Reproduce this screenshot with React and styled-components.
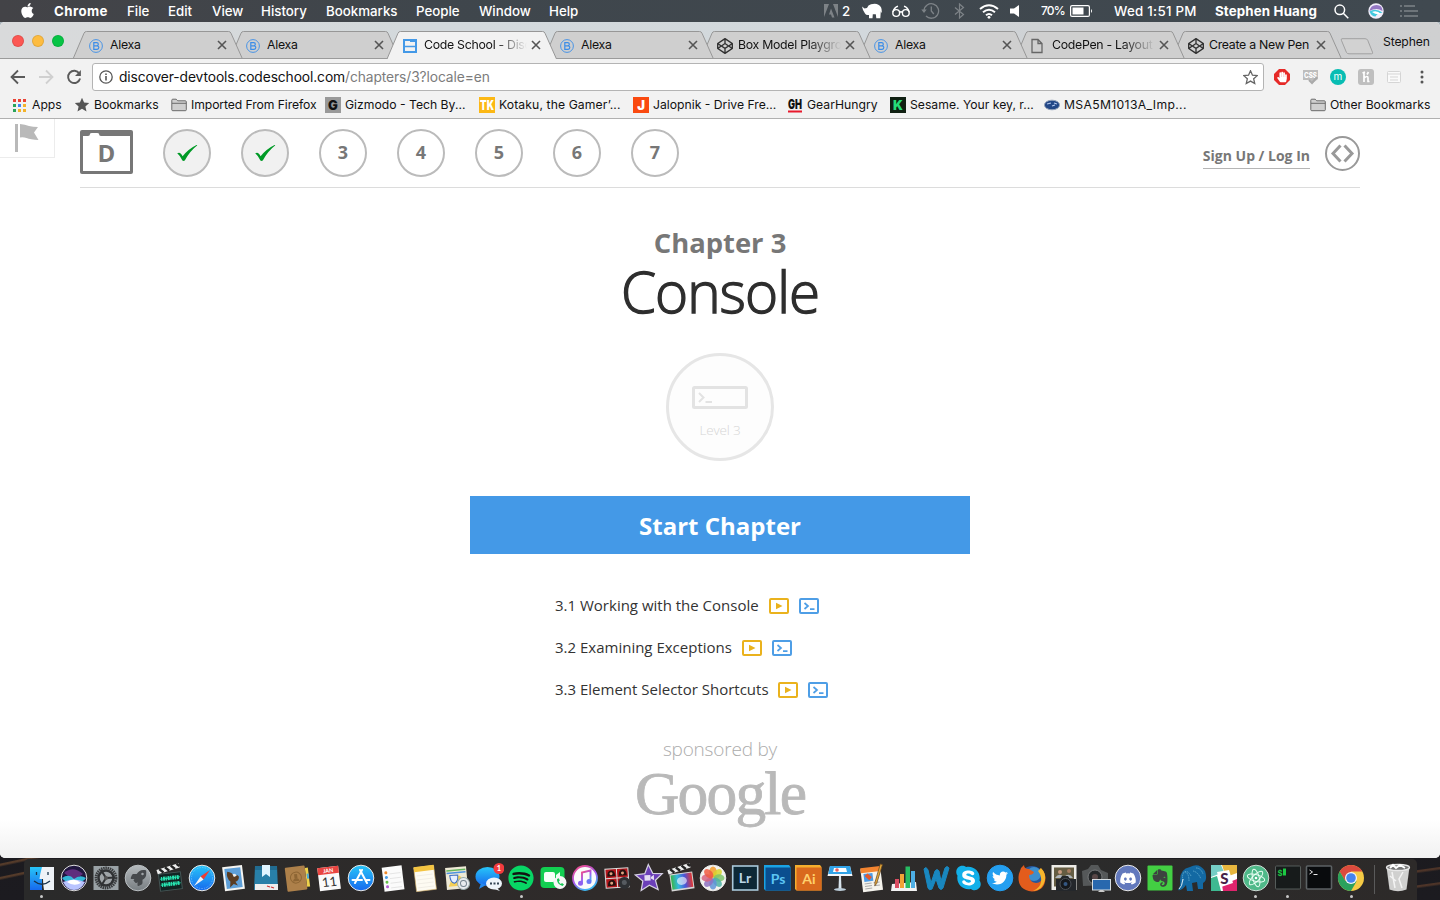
import React from "react";
import styled, { createGlobalStyle, css } from "styled-components";
import {
  FaApple, FaSpotify, FaDiscord, FaEvernote, FaTwitter, FaSkype, FaCodepen, FaRocket, FaHandPaper,
} from "react-icons/fa";

const ui = `Inter, "Liberation Sans", sans-serif`;
const open = `"Open Sans", "Noto Sans", sans-serif`;

const Global = createGlobalStyle`
  * { box-sizing: border-box; }
  body { margin: 0; background: #17120f; }
  svg { display: block; flex: none; }
`;

const Desktop = styled.div`
  width: 1440px;
  height: 900px;
  overflow: hidden;
  display: flex;
  flex-direction: column;
  font-family: ${ui};
  color: #111;
  background:
    linear-gradient(#a9b4bb, #a9b4bb) 0 0 / 1440px 40px no-repeat,
    repeating-linear-gradient(168deg, transparent 0 5px, rgba(214, 132, 66, 0.3) 6px 7px, transparent 9px 13px) 0 858px / 60px 22px no-repeat,
    repeating-linear-gradient(172deg, transparent 0 6px, rgba(190, 110, 60, 0.3) 7px 8px, transparent 10px 15px) 1400px 866px / 40px 26px no-repeat,
    linear-gradient(#19130f, #1c1b20);
`;

/* ---------- system menu bar ---------- */
const MenuBar = styled.header`
  height: 22px;
  flex: none;
  display: flex;
  align-items: center;
  background: linear-gradient(90deg, #434347, #3f464c 30%, #404950);
  color: #fff;
`;
const AppleSlot = styled.div`
  width: 54px;
  padding: 0 0 2px 19px;
`;
const MenuItem = styled.span`
  width: ${(p) => p.$w}px;
  font-size: ${(p) => p.$size || 13.3}px;
  line-height: 22px;
  font-weight: ${(p) => (p.$bold ? 700 : 500)};
  letter-spacing: ${(p) => p.$ls || 0}px;
  white-space: nowrap;
`;
const Status = styled.div`
  display: flex;
  align-items: center;
  margin-left: auto;
  padding-right: 22px;
`;
const StatusIcon = styled.div`
  width: ${(p) => p.$w}px;
  margin-right: ${(p) => p.$gap || 0}px;
  display: flex;
  justify-content: center;
  opacity: ${(p) => (p.$dim ? 0.32 : 1)};
`;

/* ---------- browser window ---------- */
const BrowserWindow = styled.main`
  height: 836px;
  flex: none;
  display: flex;
  flex-direction: column;
  overflow: hidden;
  border-radius: 5px;
  background: #fff;
`;
const TabStrip = styled.div`
  height: 37px;
  flex: none;
  display: flex;
  align-items: flex-end;
  background: linear-gradient(90deg, #d9dadb, #d3d9dc 30%, #d2d8dc 60%, #cdced0 80%, #cfd0d1);
  border-bottom: 1px solid #9b9b9b;
`;
const Lights = styled.div`
  width: 73px;
  height: 36px;
  flex: none;
  padding: 13px 0 0 12px;
  display: flex;
  gap: 8px;
`;
const Light = styled.i`
  width: 12px;
  height: 12px;
  flex: none;
  border-radius: 50%;
  background: ${(p) => p.$c};
  border: 1px solid rgba(0, 0, 0, 0.1);
`;
const TabBox = styled.div`
  position: relative;
  z-index: ${(p) => (p.$active ? 20 : 10 - p.$order)};
  width: 169px;
  height: 28px;
  margin: 0 -12px -1px 0;
  padding: 1px 13px 0 16px;
  display: flex;
  align-items: center;
  flex: none;
`;
const TabShape = styled.svg`
  position: absolute;
  inset: 0;
  z-index: -1;
`;
const Favicon = styled.div`
  width: 21px;
  display: flex;
`;
const TabTitle = styled.span`
  width: 103px;
  margin-right: 1px;
  padding-bottom: 1px;
  overflow: hidden;
  white-space: nowrap;
  font-size: 12.3px;
  line-height: 18px;
  letter-spacing: -0.28px;
  ${(p) => p.$fade && css`mask-image: linear-gradient(90deg, #000 68%, transparent 100%);`}
`;
const CloseSlot = styled.div`
  width: 15px;
  padding: 0 0 1px 3px;
`;
const NewTab = styled.div`
  width: 34px;
  height: 28px;
  flex: none;
  margin-left: 11px;
  padding-top: 8px;
`;
const Profile = styled.span`
  height: 27px;
  margin-left: 9px;
  font-size: 12.2px;
  line-height: 21px;
  letter-spacing: -0.15px;
`;
const Toolbar = styled.div`
  height: 32px;
  flex: none;
  display: flex;
  align-items: center;
  padding: 4px 0 0 4px;
  background: #f2f2f2;
`;
const NavButton = styled.div`
  width: 28px;
  display: flex;
  justify-content: center;
`;
const Omnibox = styled.div`
  width: 1172px;
  height: 28px;
  flex: none;
  margin: 0 4px;
  padding: 0 5px 0 6px;
  display: flex;
  align-items: center;
  background: #fff;
  border: 1px solid #b4b4b4;
  border-radius: 3px;
`;
const Url = styled.span`
  flex: 1;
  padding-left: 6px;
  font-size: 13.8px;
  line-height: 18px;
  letter-spacing: -0.1px;
  em { font-style: normal; color: #7c7c7c; }
`;
const Extension = styled.div`
  width: 28px;
  display: flex;
  justify-content: center;
`;
const BookmarkBar = styled.nav`
  height: 28px;
  flex: none;
  display: flex;
  align-items: center;
  padding-left: 12px;
  background: #f2f2f2;
  border-bottom: 1px solid #b0b0b0;
`;
const Bookmark = styled.div`
  width: ${(p) => p.$w}px;
  display: flex;
  align-items: center;
  white-space: nowrap;
  font-size: 12.2px;
  line-height: 18px;
  letter-spacing: ${(p) => p.$ls || 0}px;
  margin-left: ${(p) => (p.$end ? "auto" : 0)};
`;
const BookmarkIcon = styled.div`
  width: 20px;
  flex: none;
`;

/* ---------- course page ---------- */
const Page = styled.section`
  flex: 1;
  display: flex;
  align-items: flex-start;
  font-family: ${open};
  background: linear-gradient(#fff 0, #fff 700px, #f1f1f1 739px);
`;
const FlagBox = styled.div`
  width: 55px;
  height: 39px;
  margin-right: 25px;
  padding: 5px 0 0 15px;
  border: solid #ececec;
  border-width: 0 1px 1px 0;
`;
const Content = styled.div`
  width: 1280px;
  display: flex;
  flex-direction: column;
  align-items: center;
`;
const CourseHeader = styled.div`
  width: 100%;
  height: 69px;
  padding-top: 10px;
  display: flex;
  align-items: flex-start;
  border-bottom: 1px solid #dcdcdc;
`;
const CourseLogo = styled.div`
  margin: 1px 30px 0 0;
`;
const Step = styled.div`
  width: 48px;
  height: 48px;
  margin-right: 30px;
  padding-bottom: ${(p) => (p.$done ? 0 : 2)}px;
  display: flex;
  align-items: center;
  justify-content: center;
  border: 2px solid #bbb;
  border-radius: 50%;
  background: ${(p) => (p.$done ? "#f1f1f1" : "#fff")};
  color: #777;
  font-size: 18px;
  line-height: 24px;
  font-weight: 700;
`;
const SignIn = styled.a`
  margin: 17px 15px 0 auto;
  height: 23px;
  color: #777;
  font-size: 14px;
  line-height: 20px;
  font-weight: 700;
  border-bottom: 1px solid #b5b5b5;
`;
const SchoolBadge = styled.div`
  margin-top: 7px;
`;
const ChapterNumber = styled.h2`
  margin: 35px 0 0;
  height: 40px;
  color: #777;
  font-size: 27.4px;
  line-height: 40px;
  font-weight: 700;
`;
const ChapterTitle = styled.h1`
  margin: -2px 0 0;
  height: 72px;
  color: #2e2e2e;
  font-size: 56.5px;
  line-height: 62px;
  font-weight: 300;
  letter-spacing: -0.95px;
  -webkit-text-stroke: 1.4px #2e2e2e;
`;
const LevelBadge = styled.div`
  width: 108px;
  height: 108px;
  margin: 20px 1px 0 0;
  padding-top: 30px;
  display: flex;
  flex-direction: column;
  align-items: center;
  border: 3px solid #e6e6e6;
  border-radius: 50%;
  background: #fdfdfd;
  color: #d6d6d6;
  font-size: 13.5px;
  line-height: 20px;
  font-weight: 300;
  letter-spacing: -0.2px;
`;
const LevelText = styled.span`
  margin: 11px 0 0 1px;
`;
const StartButton = styled.button`
  width: 500px;
  height: 58px;
  margin-top: 35px;
  padding: 0;
  border: 0;
  background: #4499e7;
  color: #fff;
  font: 700 24px/57px ${open};
`;
const Lessons = styled.ul`
  width: 330px;
  margin: 31px 0 0;
  padding: 0;
  list-style: none;
`;
const Lesson = styled.li`
  height: 42px;
  display: flex;
  align-items: center;
  gap: 10px;
  color: #333;
  font-size: 15px;
  line-height: 20px;
`;
const LessonTitle = styled.span`
  width: ${(p) => p.$w}px;
  padding-bottom: 2px;
  white-space: nowrap;
`;
const Sponsor = styled.div`
  margin-top: 26px;
  height: 24px;
  color: #acacac;
  font-size: 19px;
  line-height: 24px;
  font-weight: 300;
  letter-spacing: -0.2px;
`;
const Wordmark = styled.div`
  color: #b9b9b9;
  font: 61.5px/64px "Liberation Serif", serif;
  letter-spacing: -1.8px;
  -webkit-text-stroke: 0.8px #b9b9b9;
`;

/* ---------- dock ---------- */
const Dock = styled.footer`
  width: 1393px;
  height: 41px;
  margin: 1px 0 0 24px;
  padding: 4px 0 0 2px;
  display: flex;
  border-radius: 5px 5px 0 0;
  background: linear-gradient(90deg, #2a2a2a, #302b2a 50%, #2b2b2b 75%, #2d2a29);
`;
const DockSlot = styled.div`
  width: 31.95px;
  flex: none;
  display: flex;
  flex-direction: column;
  align-items: center;
`;
const RunningDot = styled.i`
  width: 3px;
  height: 3px;
  margin-top: 2px;
  border-radius: 50%;
  background: #c8c8c8;
`;
const DockDivider = styled.div`
  width: 1px;
  height: 29px;
  margin: 2px 7px 0;
  background: #5a5a5a;
`;

/* ---------- small drawings ---------- */
const AlexaIcon = () => (
  <svg width="14" height="14" viewBox="0 0 14 14" fill="none" stroke="#3b8de8">
    <circle cx="7" cy="7" r="6.4" strokeWidth=".9" />
    <path d="M4.800 3.700h2.900a1.600 1.600 0 010 3.200H4.800zM4.800 6.900h3.300a1.700 1.700 0 010 3.400H4.800z" strokeWidth="1.200" />
  </svg>
);
const SchoolIcon = () => (
  <svg width="14" height="14" fill="none" stroke="#4499e7" strokeWidth="2">
    <path d="M1 1h12v12H1z" /><path d="M1 7.500h12" strokeWidth="1.400" /><path d="M7 2.500h5" strokeWidth="1" />
  </svg>
);
const PenIcon = () => <FaCodepen size={16} color="#333" />;
const FileIcon = () => (
  <svg width="16" height="16" fill="none" stroke="#666" strokeWidth="1.3">
    <path d="M1 1.500h6l4 4v9H1zM7 1.500v4h4" />
  </svg>
);
const FolderIcon = () => (
  <svg width="17" height="14" fill="#cfcfcf" stroke="#6b6b6b">
    <path d="M.8 11.800V2.200q0-1 1-1h3.400l1.500 1.600h7.600q1 0 1 1v8q0 .9-1 .9H1.800q-1 0-1-.9zM1 5.300h14.300" />
  </svg>
);
const TileIcon = ({ bg, fg, letter, bar }) => (
  <svg width="16" height="16">
    <rect width="16" height="16" fill={bg} />
    <text x="8" y={bar ? 11.500 : 13} textAnchor="middle" fontFamily="Inter" fontWeight="900" fontSize={bar ? 13.500 : 13} fill={fg} textLength={letter.length > 1 ? 14 : undefined} lengthAdjust="spacingAndGlyphs">{letter}</text>
    {bar && <path d="M1 14.500h14" stroke="#e8192c" strokeWidth="1.800" />}
  </svg>
);
const AppsIcon = () => (
  <svg width="14" height="14">
    {["#ea4335", "#ea4335", "#ea4335", "#2aa45a", "#4285f4", "#f3b32b", "#2aa45a", "#f3b32b", "#f3b32b"].map((c, i) => (
      <rect key={i} x={1 + (i % 3) * 5} y={1 + Math.floor(i / 3) * 5} width="3" height="3" fill={c} />
    ))}
  </svg>
);
const StarPath = "M8 .8l2.100 4.700 5.100.5-3.800 3.400 1.100 5L8 11.800l-4.500 2.600 1.100-5L.8 6l5.100-.5z";

function Tab({ icon, title, active, fade, order }) {
  const fill = active ? "#f2f2f2" : "#cfcfcf";
  return (
    <TabBox $active={active} $order={order}>
      <TabShape width="170" height="28">
        <path d="M0 28L11 2.200Q11.700.5 13.400.5h142.200q1.700 0 2.400 1.700L169.500 28z" fill={fill} />
        <path d="M0 28L11 2.200Q11.700.5 13.400.5h142.200q1.700 0 2.400 1.700L169.500 28" fill="none" stroke="#979797" />
        {!active && <path d="M0 27.500h169" stroke="#9b9b9b" />}
      </TabShape>
      <Favicon>{icon}</Favicon>
      <TabTitle $fade={fade}>{title}</TabTitle>
      <CloseSlot>
        <svg width="10" height="10" stroke="#555" strokeWidth="1.600"><path d="M1 1l8 8M9 1L1 9" /></svg>
      </CloseSlot>
    </TabBox>
  );
}

const VideoIcon = () => (
  <svg width="20" height="16" fill="none" stroke="#eab21d" strokeWidth="2">
    <rect x="1" y="1" width="18" height="14" rx="1" />
    <path d="M7 4.800L13.500 8 7 11.300z" fill="#eab21d" stroke="none" />
  </svg>
);
const ConsoleIcon = () => (
  <svg width="20" height="16" fill="none" stroke="#4e9ee6" strokeWidth="2">
    <rect x="1" y="1" width="18" height="14" rx="1" />
    <path d="M5.500 5L9 8l-3.500 3M11 11.200h4.500" strokeWidth="1.700" />
  </svg>
);
const Check = () => (
  <svg width="22" height="20">
    <path d="M1.200 10.300q1.800-.9 2.800-.2 1.500 1 2.600 3.200Q12 6.200 20.500 2q1-.2.600.6Q14 8 8.800 17.600q-1.500.6-2.400 0Q4.500 13 1.200 10.300z" fill="#009a26" />
  </svg>
);

/* ---------- dock artwork, each on a 30 x 30 field ---------- */
const Disc = ({ fill, stroke = "#e8e8e8" }) => <circle cx="15" cy="15" r="12.8" fill={fill} stroke={stroke} strokeWidth="1" />;
const Tilt = ({ a = -7, children }) => <g transform={`rotate(${a} 15 15)`}>{children}</g>;
const Letters = ({ children, fill, size = 14, x = 15, y = 20, weight = 700 }) => (
  <text x={x} y={y} textAnchor="middle" fontFamily="Lato, Inter" fontWeight={weight} fontSize={size} fill={fill}>{children}</text>
);
const clap = (
  <g transform="rotate(-10 5 8)"><path d="M3 5h23v4.500H3z" fill="#eee" /><path d="M6 5l3 4.500M12 5l3 4.500M18 5l3 4.500M24 5l2 3" stroke="#222" strokeWidth="2.400" /></g>
);

const dockIcons = [
  { dot: true, art: <><path d="M3 4h12v23H3z" fill="url(#azure)" /><path d="M15 4q-2 7-2.500 12h3.500q0 6 1 11h10V4z" fill="#eef2f7" /><path d="M9.500 9v3M21 9v3M7 18q8 6.500 16 0" fill="none" stroke="#17334e" strokeWidth="1.300" /></> },
  { art: <><Disc fill="#20173f" stroke="#ddd" /><path d="M5 10q9-8 19 1L15 17z" fill="#7b3798" opacity=".7" /><path d="M3 15q7-5 12 1 6-5 12-1-3 5-12 5T3 15z" fill="#35c9e8" opacity=".9" /><path d="M4 19q11-5 22 0-4 8-11 8T4 19z" fill="#b9c4ff" /><path d="M8 19q7-5 14 1-7 4-14-1z" fill="#fff" /></> },
  { art: <><rect x="2.500" y="3" width="25" height="24" fill="#9aa2a6" /><circle cx="15" cy="15" r="10" fill="none" stroke="#393b3d" strokeWidth="2.800" strokeDasharray="1.500 .7" /><circle cx="15" cy="15" r="7.500" fill="#9fa4a7" stroke="#303234" strokeWidth="2.500" /><path d="M15 15L10 7M15 15l9-.5M15 15l-5 8" stroke="#303234" strokeWidth="2" /><circle cx="15" cy="15" r="2" fill="#555" /></> },
  { art: <><Disc fill="url(#steel)" stroke="#b9bec1" /><FaRocket x="7.500" y="7" size={16} color="#46494c" /></> },
  { art: <Tilt><rect x="4" y="10" width="22" height="17" fill="#122423" stroke="#455" />{clap}<path d="M5 15h20M5 21h20" stroke="#1bd69e" strokeWidth="1" /><path d="M6 15h18M6 21h18" stroke="#29e3b1" strokeWidth="4" strokeDasharray="1.200 .8 2 .6" /></Tilt> },
  { art: <><Disc fill="url(#azure)" /><circle cx="15" cy="15" r="10.500" fill="none" stroke="#9ad8ff" strokeWidth="1" strokeDasharray=".5 1.200" /><path d="M23 7l-6.500 9.500-3-3z" fill="#f03c32" /><path d="M7 23l6.500-9.500 3 3z" fill="#f3f3f3" /></> },
  { art: <Tilt><path d="M4.500 3h20v24h-20z" fill="#f5f5f2" /><path d="M6.500 5h16v20h-16z" fill="#5e9fd8" /><path d="M9 8q5 1 6 5 3-2 5 1 0 4-4 5l2 4-4-2-4 3 1-6q-4-4-2-10z" fill="#5a3c22" /><path d="M14 11q3-1 4 2l-3 1z" fill="#eee" /></Tilt> },
  { art: <><path d="M4 3h22l1 24H3z" fill="#287fa8" /><path d="M4 3h22v4H4z" fill="#174d6b" opacity=".4" /><path d="M11 2h8v12l-4-3-4 3z" fill="#e0f4ff" /><path d="M4 21h23v6H4z" fill="#eee" /><path d="M16 23l3 1M20 24l3 1" stroke="#c33" strokeWidth="1.300" /></> },
  { art: <Tilt><path d="M24 6h3v19h-3z" fill="#efd24b" /><path d="M25 12h2v5h-2z" fill="#4aa8d8" /><rect x="4" y="3.500" width="20" height="24" rx="1" fill="#ad804a" /><circle cx="14" cy="14.500" r="5.500" fill="none" stroke="#8d6534" /><path d="M10.500 18q1-3 3.500-3t3.500 3zM12.500 11h3v4h-3z" fill="#8d6534" /></Tilt> },
  { art: <Tilt><rect x="4.500" y="4" width="21" height="23" fill="#fafafa" /><rect x="4.500" y="4" width="21" height="7" fill="#e94541" /><Letters y={9.700} size={5.500} fill="#fff">JAN</Letters><Letters y={23.500} size={13} weight={400} fill="#333">11</Letters></Tilt> },
  { art: <><Disc fill="url(#azure)" /><path d="M16 7L9 20M14 7l7 13M6.500 17H16M19.500 17h4" stroke="#fff" strokeWidth="2" strokeLinecap="round" /></> },
  { art: <Tilt><rect x="5" y="3.500" width="20" height="24" fill="#fbfbfb" />{["#f08a2c", "#4a9ee8", "#65c04a", "#b25ed2"].map((c, i) => <g key={c}><circle cx="8.500" cy={9 + i * 4.700} r="1.500" fill={c} /><path d={`M12 ${10.5 + i * 4.7}h11`} stroke="#ddd" strokeWidth=".7" /></g>)}</Tilt> },
  { art: <Tilt><rect x="5" y="3.500" width="20" height="24" fill="#fdfbf2" stroke="#d5b36a" strokeWidth=".6" /><rect x="5" y="3" width="20" height="5" fill="#f4c441" /><path d="M7 12h16M7 16h16M7 20h16M7 24h16" stroke="#e9e6dd" strokeWidth=".6" /></Tilt> },
  { art: <Tilt a={-5}><rect x="4" y="4" width="21" height="22" fill="#eee9d5" /><path d="M5 7h19" stroke="#65b75e" strokeWidth="1.500" /><path d="M5 9.500h19" stroke="#4c93e0" strokeWidth="1.500" /><path d="M6 23l5-10h7l7 10" fill="#f4cf56" /><path d="M8 12h8q0 7-4 8-4-1-4-8z" fill="#e5efff" stroke="#3d6fc4" /><circle cx="21" cy="21" r="6" fill="#e8ecef" stroke="#9aa" /><circle cx="21" cy="21" r="3" fill="none" stroke="#788791" /></Tilt> },
  { art: <><ellipse cx="13.500" cy="13.500" rx="12" ry="9.500" fill="url(#azure)" /><path d="M7 20l-2 6 7-4z" fill="#2489ee" /><ellipse cx="20" cy="20.500" rx="8" ry="6" fill="#eef5fb" /><path d="M16 20.500h9" stroke="#345" strokeWidth="2.200" strokeDasharray="2 1.500" /><path d="M23 25l3 3-6-2z" fill="#eef5fb" /><circle cx="25" cy="5.500" r="5.500" fill="#f33b3e" /><Letters x={25} y={8.200} size={7.500} fill="#fff">1</Letters></> },
  { dot: true, art: <><circle cx="15" cy="15" r="10" fill="#121212" /><FaSpotify x="2" y="2" size={26} color="#08d665" /></> },
  { art: <><rect x="2.500" y="4" width="24" height="21" rx="4" fill="#12cf51" /><rect x="6" y="9" width="11" height="10" rx="2" fill="#f5fff7" /><path d="M18 12l4-3v10l-4-3z" fill="#eafff0" /><circle cx="22" cy="19.500" r="6.500" fill="#f6f6f6" /><path d="M19 16q-.5 5 5.500 7l1.500-1.500-2-1.500-1.200 1q-1.500-1-2-2.500l1-1-1-2.300z" fill="#16c653" /></> },
  { art: <><circle cx="15" cy="15" r="12" fill="#fafafa" stroke="url(#music)" strokeWidth="1.800" /><path d="M12 20V9.500l8.500-2V18" fill="none" stroke="url(#music)" strokeWidth="1.900" /><circle cx="10.500" cy="20.300" r="2.500" fill="#8f5ff0" /><circle cx="19" cy="18.500" r="2.500" fill="#6b77f5" /></> },
  { art: <Tilt a={-4}><rect x="3" y="5" width="24" height="20" fill="#ddd" />{[[4, 6], [15.5, 6], [4, 15.5], [15.5, 15.5]].map(([x, y]) => <g key={`${x}-${y}`}><rect x={x} y={y} width="10.500" height="8.500" fill="#b1161b" /><path d={`M${x + 1.5} ${y + 7}q0-6 4-6t4 6z`} fill="#26100e" /><circle cx={x + 5.3} cy={y + 4.3} r="1.500" fill="#dca27f" /></g>)}<circle cx="22" cy="20.500" r="6" fill="#2d3033" /><circle cx="22" cy="20" r="2.500" fill="#565b60" /></Tilt> },
  { art: <Tilt a={-3}><path d="M15 1.500l4 9 9.500.8-7.200 6.300 2.200 9.500L15 22.200l-8.500 4.900 2.200-9.500L1.500 11.300l9.500-.8z" fill="#6b3fb8" stroke="#d6d2e2" strokeWidth="1.200" /><rect x="10.500" y="12" width="6" height="5.500" fill="#e4ddf5" /><path d="M17 14l3-2v5.500l-3-2z" fill="#e4ddf5" /></Tilt> },
  { art: <Tilt a={-8}><rect x="4" y="10" width="23" height="17" fill="#d8d8d8" /><rect x="5" y="11" width="21" height="14.500" fill="url(#rainbow)" /><ellipse cx="15.500" cy="18" rx="5" ry="4" fill="#fff" opacity=".6" />{clap}</Tilt> },
  { art: <><Disc fill="#f4f3ef" />{["#f49b2b", "#d7d32b", "#7cc46a", "#4fb2a5", "#5f94d8", "#8e72c2", "#d7627f", "#f05b42"].map((c, i) => <ellipse key={c} cx="15" cy="9" rx="3.700" ry="5.500" fill={c} opacity=".85" transform={`rotate(${i * 45} 15 15)`} />)}</> },
  { art: <><rect x="2.700" y="3" width="25" height="24" fill="#0d2836" stroke="#a9c8da" strokeWidth="1.600" /><Letters fill="#b8d5e6">Lr</Letters></> },
  { art: <><path d="M2 2h25l1.500 2v23.500H3.500L2 26z" fill="#1aa3e4" /><path d="M3.500 4.500h25v23h-25z" fill="#0a4e8f" /><Letters x={16} y={20.500} fill="#5cc5f3">Ps</Letters></> },
  { art: <><path d="M2 2h25l1.500 2v23.500H3.500L2 26z" fill="#f5ae2e" /><path d="M3.500 4.500h25v23h-25z" fill="#d9691d" /><Letters x={16} y={20.500} fill="#ffd06d">Ai</Letters></> },
  { art: <><path d="M5 3h20l2.500 10h-25z" fill="#f4f7fb" /><path d="M5 3h20l1.800 8H3.200z" fill="#32a3e8" /><path d="M9 5h12l1 4H8z" fill="#fff" /><circle cx="12" cy="7" r="1.800" fill="#e76060" /><path d="M14 13h2l.5 13h-3z" fill="#d8e4ec" /><ellipse cx="15" cy="26.500" rx="6" ry="1.500" fill="#bccdd9" /></> },
  { art: <Tilt a={-7}><rect x="4.500" y="5" width="20" height="23" fill="#f5f3ed" /><rect x="4.500" y="4" width="20" height="5" fill="#f38430" /><rect x="7" y="10" width="9" height="8" fill="#4a9ae5" /><path d="M8 12l3-2 4 4-3 3z" fill="#e4572e" /><path d="M7 20h7M7 22.500h7M7 25h7M16 20h6M16 23h6" stroke="#aaa" /><path d="M25 2l2 1-8 18-2 2 .3-3z" fill="#e6aa3a" stroke="#684520" strokeWidth=".7" /></Tilt> },
  { art: <><path d="M3 21l24-2 1 9H2z" fill="#f2f2f2" /><path d="M6 16h4v9H6z" fill="#d94c61" /><path d="M11 11h4v14h-4z" fill="#f0a336" /><path d="M16.500 3.500h4.500V25h-4.500z" fill="#27bc62" /><path d="M22 8h4v17h-4z" fill="#4daee4" /></> },
  { art: <path d="M3 6q2-3 4 1l3 13 4-12q2-3 4 0l2 10 4-13q2-3 4 0L22 25q-2 3-4 0l-3-9-4 10q-3 2-4-1z" fill="#1987bf" stroke="#1987bf" strokeWidth="1" /> },
  { art: <><circle cx="15" cy="15" r="9" fill="#fff" /><FaSkype x="1.500" y="1" size={28} color="#12b0e9" /></> },
  { art: <><Disc fill="#249ff0" stroke="#249ff0" /><FaTwitter x="7" y="7" size={16} color="#fff" /></> },
  { art: <><circle cx="15" cy="15" r="12" fill="#27579d" /><circle cx="17" cy="11" r="7" fill="#3d8fce" /><path d="M3 8q1-4 4-6 0 4 5 4l5 3q-1 3-5 3 0 7 7 8 6 0 8-8l-4-7q5 3 5.500 10Q28 28 15 28.500 1 27 1.500 14q0-3 1.500-6z" fill="#e35c1c" /><path d="M24 5q5 5 4 12-2 10-12 11 7-3 8-9 1-6-3-11z" fill="#f6b52c" /></> },
  { art: <><rect x="2.500" y="2" width="25" height="25" fill="#ecebe7" /><rect x="5" y="4.500" width="20" height="19" fill="#655d43" /><circle cx="11" cy="9" r="2" fill="#c79a80" /><circle cx="20" cy="8" r="2" fill="#a87c60" /><path d="M6 15q4-6 9-1 5-5 9 1" fill="#aeb4ba" /><path d="M7 16h4l2-3h6l2 3h6v12H7z" fill="#24272b" /><circle cx="16.500" cy="21" r="5.500" fill="#15181c" stroke="#4c5056" /><circle cx="16.500" cy="21" r="2" fill="#345782" /></> },
  { art: <><path d="M1 8l6-2 3-4h7l3 5 7 3v12L2 23z" fill="#555859" /><circle cx="14" cy="14" r="7" fill="#25282a" stroke="#77797b" /><circle cx="14" cy="14" r="3" fill="#594848" /><rect x="11" y="16" width="19" height="11.500" fill="#d6dde1" /><rect x="12" y="17" width="17" height="9.500" fill="#2868ae" /><path d="M17 29h7l-2-2h-3z" fill="#ccc" /></> },
  { art: <><Disc fill="#6279bd" /><FaDiscord x="6.500" y="7" size={17} color="#fff" /></> },
  { art: <><rect x="2.500" y="2.500" width="25" height="25" rx="1" fill="#43cf43" /><FaEvernote x="5" y="5" size={20} color="#3d4240" /></> },
  { art: <><path d="M3 17q0-11 10-13 9-5 15 4 3 9-2 12v6h-5l-1-7-5 1 1 8h-6l-1-6q-4 6-8 5 3-4 2-10z" fill="#1369a3" /><path d="M8 9q4 1 4 9M16 8q5 1 8 8M14 13q-3-6-7-4-3 5 0 9M19 5q5 0 7 6" fill="none" stroke="#5fa9cd" strokeWidth=".9" strokeDasharray="1.500 .8" /><path d="M6 16q-1 8-4 10" stroke="#dbeaf2" fill="none" /></> },
  { art: <><rect x="2" y="2" width="26" height="26" rx="1" fill="#fff" /><path d="M2 2h10l3 7-13 5z" fill="#75cdc5" /><path d="M13 2h15v8l-11 4z" fill="#e7b63e" /><path d="M2 15l6-2 4 15H2z" fill="#3eb991" /><path d="M13 22l15-6v12H14z" fill="#df246d" /><path d="M8 9l12-2 4 13-12 4z" fill="#fff" /><Letters x={15.500} y={21} size={15} weight={900} fill="#482148">S</Letters></> },
  { dot: true, art: <><Disc fill="#4fb989" stroke="#cfd9d4" /><g fill="none" stroke="#eafff4" strokeWidth="1"><ellipse cx="15" cy="15" rx="9" ry="3.300" transform="rotate(15 15 15)" /><ellipse cx="15" cy="15" rx="9" ry="3.300" transform="rotate(75 15 15)" /><ellipse cx="15" cy="15" rx="9" ry="3.300" transform="rotate(135 15 15)" /></g><circle cx="15" cy="15" r="1.300" fill="#fff" /></> },
  { dot: true, art: <><rect x="2.500" y="3" width="25" height="23" rx="1" fill="#171b1b" stroke="#555c5a" /><text x="4.500" y="12.500" fontFamily="Liberation Mono" fontWeight="700" fontSize="8.500" fill="#1cc943">$</text><path d="M10 5.500h3v7h-3z" fill="#1cc943" /></> },
  { art: <><rect x="2.500" y="3" width="25" height="23" rx="1" fill="#090b0d" stroke="#5c6264" strokeWidth="1.600" /><path d="M5.500 7l3 2-3 2M9.500 11.500h4" fill="none" stroke="#e9e9e9" /></> },
  { dot: true, art: <><circle cx="15" cy="15" r="13" fill="#f5ca45" /><path d="M3.700 8.500A13 13 0 0126.300 8.500H15L9.300 18z" fill="#db4a3e" /><path d="M3.700 8.500A13 13 0 0015 28l5.600-9.800L9.400 18z" fill="#2ba15c" /><circle cx="15" cy="15" r="6" fill="#f6f6f6" /><circle cx="15" cy="15" r="4.800" fill="#4584ee" /></> },
];

function DockIcon({ dot, art }) {
  return (
    <DockSlot>
      <svg width="30" height="30" viewBox="0 0 30 30">{art}</svg>
      {dot && <RunningDot />}
    </DockSlot>
  );
}

const Gradients = styled.svg`
  position: absolute;
`;

const menus = [["File", 41], ["Edit", 44], ["View", 49], ["History", 65], ["Bookmarks", 90], ["People", 63], ["Window", 70], ["Help", 60]];
const lessons = [["3.1 Working with the Console", 204], ["3.2 Examining Exceptions", 177], ["3.3 Element Selector Shortcuts", 213]];
const tabs = [
  { icon: <AlexaIcon />, title: "Alexa" },
  { icon: <AlexaIcon />, title: "Alexa" },
  { icon: <SchoolIcon />, title: "Code School - Discover", active: true, fade: true },
  { icon: <AlexaIcon />, title: "Alexa" },
  { icon: <PenIcon />, title: "Box Model Playground", fade: true },
  { icon: <AlexaIcon />, title: "Alexa" },
  { icon: <FileIcon />, title: "CodePen - Layout B", fade: true },
  { icon: <PenIcon />, title: "Create a New Pen" },
];

export default function App() {
  return (
    <Desktop>
      <Global />
      <Gradients width="0" height="0">
        <defs>
          <linearGradient id="azure" x2="0" y2="1"><stop stopColor="#27c5f8" /><stop offset="1" stopColor="#1769ee" /></linearGradient>
          <linearGradient id="steel" x2="0" y2="1"><stop stopColor="#b5babd" /><stop offset="1" stopColor="#777d81" /></linearGradient>
          <linearGradient id="music" x2=".5" y2="1"><stop stopColor="#f6487c" /><stop offset=".6" stopColor="#a45af0" /><stop offset="1" stopColor="#3fb6ef" /></linearGradient>
          <linearGradient id="rainbow"><stop stopColor="#3ab54a" /><stop offset=".3" stopColor="#35b9e0" /><stop offset=".65" stopColor="#4c54d8" /><stop offset="1" stopColor="#e5362e" /></linearGradient>
        </defs>
      </Gradients>

      <MenuBar>
        <AppleSlot><FaApple size={17} /></AppleSlot>
        <MenuItem $w={73} $bold $ls={0.4}>Chrome</MenuItem>
        {menus.map(([t, w]) => <MenuItem key={t} $w={w}>{t}</MenuItem>)}
        <Status>
          <StatusIcon $w={17} $gap={3} $dim>
            <svg width="14" height="14" fill="#fff"><path d="M0 0h5L0 13zM9 0h5v13zM7 4.500l3.500 9H8L7 10.500H5z" /></svg>
          </StatusIcon>
          <MenuItem $w={20}>2</MenuItem>
          <StatusIcon $w={20} $gap={9}>
            <svg width="20" height="16" fill="#fff"><path d="M0 3.500l2.500 2L5 5Q6 2 9 1.200q7-2 10 3 1 2 .8 6l-1-2-.5 7h-4l-.5-4h-3l-.3 4H7V12q-3 .5-4-1.500L1 7z" /></svg>
          </StatusIcon>
          <StatusIcon $w={20} $gap={9}>
            <svg width="18" height="14" fill="none" stroke="#fff" strokeWidth="1.400"><circle cx="4.200" cy="9" r="3.400" /><circle cx="13.800" cy="9" r="3.400" /><path d="M7.500 8.500q1.500-1.300 3 0M.9 8Q2.500 3 6 2.200M17.100 8Q15.500 3 12 2.200" /></svg>
          </StatusIcon>
          <StatusIcon $w={20} $gap={12} $dim>
            <svg width="19" height="18" fill="none" stroke="#fff" strokeWidth="1.300"><path d="M3 8.500a7.300 7.300 0 112 5.500M10.300 4.500V9l2.500 3" /><path d="M.3 7.500h5.400L3 11z" fill="#fff" stroke="none" /></svg>
          </StatusIcon>
          <StatusIcon $w={15} $gap={11} $dim>
            <svg width="11" height="16" fill="none" stroke="#fff" strokeWidth="1.200"><path d="M1 4.500l8.500 7L5.500 15V1l4 3.500L1 11.500" /></svg>
          </StatusIcon>
          <StatusIcon $w={22} $gap={9}>
            <svg width="20" height="15" fill="none" stroke="#fff" strokeWidth="2"><path d="M1 5q9-7.500 18 0M4 8.300q6-5 12 0M7 11.300q3-2.500 6 0" /><circle cx="10" cy="13.300" r="1.400" fill="#fff" stroke="none" /></svg>
          </StatusIcon>
          <StatusIcon $w={12} $gap={20}>
            <svg width="10" height="12" fill="#fff"><path d="M0 3.500h4L9 0v12L4 8.500H0z" /></svg>
          </StatusIcon>
          <MenuItem $w={28} $size={12} $ls={-0.8}>70%</MenuItem>
          <StatusIcon $w={24} $gap={21}>
            <svg width="23" height="12"><rect x=".6" y=".6" width="18.800" height="10.800" rx="1.500" fill="none" stroke="#fff" strokeWidth="1.200" /><path d="M2.500 2.500h11v7h-11z" fill="#fff" /><path d="M21 4q2 2 0 4z" fill="#fff" /></svg>
          </StatusIcon>
          <MenuItem $w={101} $ls={0.27}>Wed 1:51 PM</MenuItem>
          <MenuItem $w={117} $bold $ls={0.15}>Stephen Huang</MenuItem>
          <StatusIcon $w={18} $gap={17}>
            <svg width="15" height="15" fill="none" stroke="#fff" strokeWidth="1.500"><circle cx="5.800" cy="5.800" r="4.800" /><path d="M9.300 9.300l5 5" /></svg>
          </StatusIcon>
          <StatusIcon $w={18} $gap={14}>
            <svg width="16" height="16"><circle cx="8" cy="8" r="7.700" fill="#f2eefb" /><path d="M1.500 8q1-6 7-6t6 6q-6-4-13 0z" fill="#9477c4" /><path d="M1.500 8.500q6-4 13 1-6 1-7 4-4 0-6-5z" fill="#43c9df" /><path d="M4 9q5-2 9 2-5 1-9-2z" fill="#fff" /></svg>
          </StatusIcon>
          <StatusIcon $w={19} $dim>
            <svg width="18" height="12" stroke="#fff" strokeWidth="1.500"><path d="M0 1h2M0 6h2M0 11h2M4 1h11M4 6h14M4 11h14" /></svg>
          </StatusIcon>
        </Status>
      </MenuBar>

      <BrowserWindow>
        <TabStrip>
          <Lights><Light $c="#fc5753" /><Light $c="#fdbc40" /><Light $c="#07c445" /></Lights>
          {tabs.map((t, i) => <Tab key={i} order={i} {...t} />)}
          <NewTab>
            <svg width="34" height="17"><path d="M2 .7h23q2 0 2.700 1.500l4.800 12q.6 1.600-1 1.600H9q-2 0-2.600-1.500l-5-12Q.8.700 2 .7z" fill="#d2d2d2" stroke="#a1a1a1" /></svg>
          </NewTab>
          <Profile>Stephen</Profile>
        </TabStrip>

        <Toolbar>
          <NavButton>
            <svg width="16" height="16" fill="none" stroke="#5a5a5a" strokeWidth="1.800"><path d="M15 8H2M8 1.500L1.500 8 8 14.500" /></svg>
          </NavButton>
          <NavButton>
            <svg width="16" height="16" fill="none" stroke="#d0d0d0" strokeWidth="1.800"><path d="M1 8h13M8 1.500L14.500 8 8 14.500" /></svg>
          </NavButton>
          <NavButton>
            <svg width="16" height="16" fill="none" stroke="#5a5a5a" strokeWidth="1.900"><path d="M13.300 4.500a6.100 6.100 0 10.800 5" /><path d="M14.900 1v6H9z" fill="#5a5a5a" stroke="none" /></svg>
          </NavButton>
          <Omnibox>
            <svg width="14" height="14" fill="none" stroke="#555" strokeWidth="1.300"><circle cx="7" cy="7" r="6.200" /><path d="M7 6v4.500M7 3.400v1.500" strokeWidth="1.600" /></svg>
            <Url>discover-devtools.codeschool.com<em>/chapters/3?locale=en</em></Url>
            <svg width="15" height="15" viewBox="0 0 16 16" fill="none" stroke="#666" strokeWidth="1.400"><path d={StarPath} /></svg>
          </Omnibox>
          <Extension>
            <svg width="16" height="16"><path d="M5 0h6l5 5v6l-5 5H5l-5-5V5z" fill="#e62a28" /><FaHandPaper x="2.500" y="2.500" size={11} color="#fff" /></svg>
          </Extension>
          <Extension>
            <svg width="17" height="16"><path d="M1 1h15v9l-5 4-3-3H1z" fill="#bdbdbd" /><text x="8.500" y="8.500" textAnchor="middle" fontFamily="Inter" fontWeight="800" fontSize="7" textLength="13" lengthAdjust="spacingAndGlyphs" fill="#fff">CSS</text><path d="M7 11l3 3 5-6" fill="none" stroke="#aaa" strokeWidth="2" /></svg>
          </Extension>
          <Extension>
            <svg width="16" height="16"><circle cx="8" cy="8" r="8" fill="#08bdb3" /><text x="8" y="11.300" textAnchor="middle" fontFamily="Inter" fontSize="10" fill="#fff">m</text></svg>
          </Extension>
          <Extension>
            <svg width="16" height="16"><rect width="16" height="16" rx="3" fill="#bfbfbf" /><path d="M6 3v10M4.500 4L7 3M6 9q4-3 4 0v3.500h1.500M10.500 3L9 5.500" fill="none" stroke="#fff" strokeWidth="1.700" /></svg>
          </Extension>
          <Extension>
            <svg width="14" height="12" fill="#fafafa" stroke="#d5d5d5"><rect x=".5" y=".5" width="13" height="11" rx="1" /><path d="M1 3h12M3 6h8M3 9h8" /></svg>
          </Extension>
          <Extension>
            <svg width="4" height="14" fill="#555"><circle cx="2" cy="2" r="1.500" /><circle cx="2" cy="7" r="1.500" /><circle cx="2" cy="12" r="1.500" /></svg>
          </Extension>
        </Toolbar>

        <BookmarkBar>
          <Bookmark $w={62}><BookmarkIcon><AppsIcon /></BookmarkIcon>Apps</Bookmark>
          <Bookmark $w={97}><BookmarkIcon><svg width="16" height="16" fill="#555"><path d={StarPath} /></svg></BookmarkIcon>Bookmarks</Bookmark>
          <Bookmark $w={154} $ls={-0.09}><BookmarkIcon><FolderIcon /></BookmarkIcon>Imported From Firefox</Bookmark>
          <Bookmark $w={154}><BookmarkIcon><TileIcon bg="#999" fg="#111" letter="G" /></BookmarkIcon>Gizmodo - Tech By...</Bookmark>
          <Bookmark $w={154} $ls={0.1}><BookmarkIcon><TileIcon bg="#fcb815" fg="#fff" letter="TK" /></BookmarkIcon>Kotaku, the Gamer’...</Bookmark>
          <Bookmark $w={154}><BookmarkIcon><TileIcon bg="#fa4a10" fg="#fff" letter="J" /></BookmarkIcon>Jalopnik - Drive Fre...</Bookmark>
          <Bookmark $w={103}><BookmarkIcon><TileIcon bg="#f2f2f2" fg="#111" letter="GH" bar /></BookmarkIcon>GearHungry</Bookmark>
          <Bookmark $w={154}><BookmarkIcon><TileIcon bg="#102012" fg="#25dc79" letter="K" /></BookmarkIcon>Sesame. Your key, r...</Bookmark>
          <Bookmark $w={150} $ls={0.33}>
            <BookmarkIcon>
              <svg width="16" height="16"><ellipse cx="8" cy="8" rx="7.600" ry="4.800" fill="#234887" stroke="#98a5ba" /><path d="M3 7l4-1M8 9l3-1M10 6l3 1" stroke="#b4c8ee" strokeWidth="1.100" /></svg>
            </BookmarkIcon>
            MSA5M1013A_Imp...
          </Bookmark>
          <Bookmark $w={130} $end><BookmarkIcon><FolderIcon /></BookmarkIcon>Other Bookmarks</Bookmark>
        </BookmarkBar>

        <Page>
          <FlagBox>
            <svg width="24" height="28" fill="#b9b9b9"><path d="M0 0h3v28H0zM5 0q5 .5 9 2 4 1 9 1l-4 5.500 4.500 7.500q-8-.5-12-2-3-1-6.500-.5z" /></svg>
          </FlagBox>
          <Content>
            <CourseHeader>
              <CourseLogo>
                <svg width="53" height="44"><rect width="53" height="44" rx="2" fill="#777" /><path d="M3 6h5q2 0 2-2 0-1 2-1h5q2 0 2 1 0 2 2 2h29v35H3z" fill="#fff" /><text x="26.300" y="32" textAnchor="middle" fontFamily="Open Sans" fontWeight="700" fontSize="24" fill="#777">D</text></svg>
              </CourseLogo>
              <Step $done><Check /></Step>
              <Step $done><Check /></Step>
              {[3, 4, 5, 6, 7].map((n) => <Step key={n}>{n}</Step>)}
              <SignIn>Sign Up / Log In</SignIn>
              <SchoolBadge>
                <svg width="35" height="35" fill="none" stroke="#999"><circle cx="17.500" cy="17.500" r="16.500" strokeWidth="2" /><path d="M15.500 9.500L8 17.500l7.500 8M19.500 9.500l7.500 8-7.500 8" strokeWidth="3" /></svg>
              </SchoolBadge>
            </CourseHeader>

            <ChapterNumber>Chapter 3</ChapterNumber>
            <ChapterTitle>Console</ChapterTitle>
            <LevelBadge>
              <svg width="56" height="23" fill="none" stroke="#e3e3e3"><rect x="1.500" y="1.500" width="53" height="20" rx="1" strokeWidth="3" /><path d="M7 7l4.500 4.500L7 16M13.500 16h6.500" strokeWidth="2" /></svg>
              <LevelText>Level 3</LevelText>
            </LevelBadge>
            <StartButton>Start Chapter</StartButton>
            <Lessons>
              {lessons.map(([t, w]) => (
                <Lesson key={t}><LessonTitle $w={w}>{t}</LessonTitle><VideoIcon /><ConsoleIcon /></Lesson>
              ))}
            </Lessons>
            <Sponsor>sponsored by</Sponsor>
            <Wordmark>Google</Wordmark>
          </Content>
        </Page>
      </BrowserWindow>

      <Dock>
        {dockIcons.map((d, i) => <DockIcon key={i} {...d} />)}
        <DockDivider />
        <DockSlot>
          <svg width="30" height="30"><path d="M3.500 4l3 22.500Q15 30 23.500 26.500L26.500 4z" fill="#d0d0cf" /><ellipse cx="15" cy="4.500" rx="11.500" ry="3" fill="#777" stroke="#e8e8e8" strokeWidth="1.400" /><path d="M7 5l3-3 3 3 4-3 5 3" fill="none" stroke="#fff" strokeWidth="2" /><path d="M9 9l3 16M20 9l-4 7 3 9M7 13l6 5" stroke="#f3f3f3" strokeWidth="1.500" fill="none" /></svg>
        </DockSlot>
      </Dock>
    </Desktop>
  );
}
